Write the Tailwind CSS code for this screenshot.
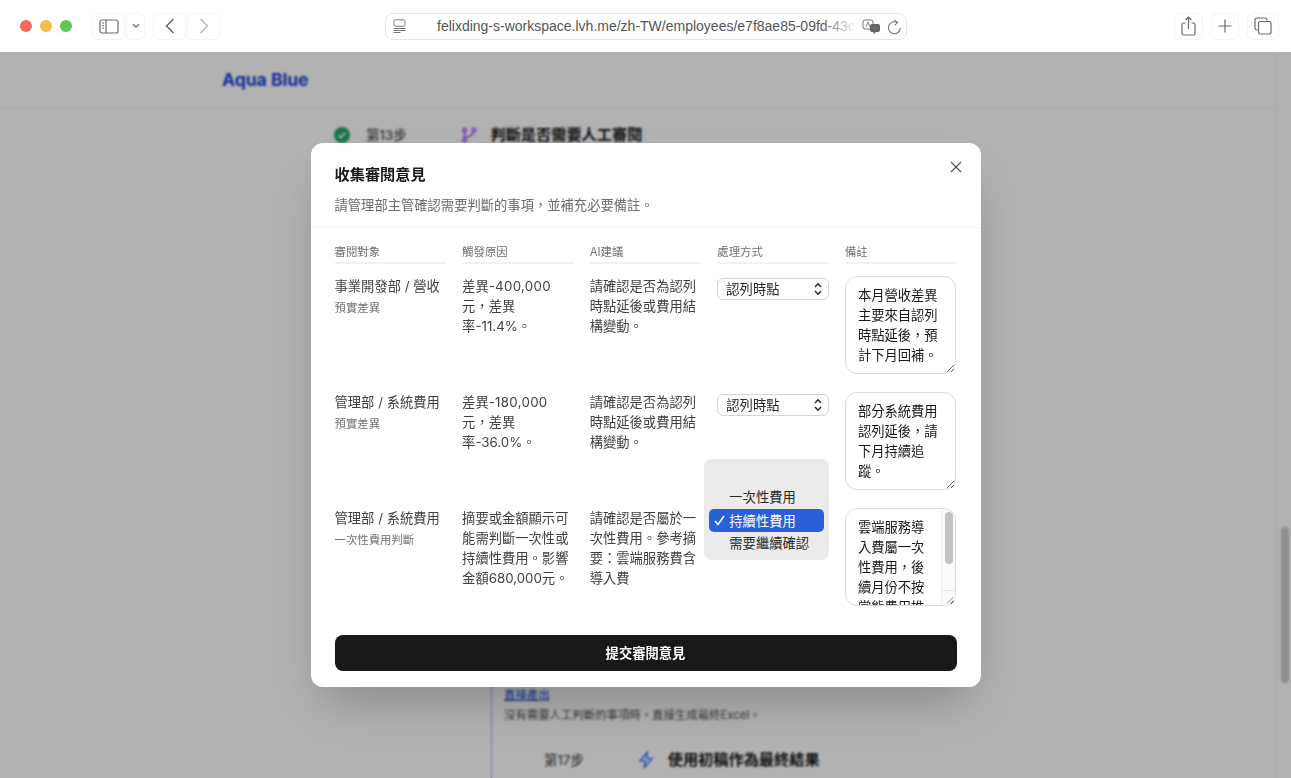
<!DOCTYPE html>
<html lang="zh-TW">
<head>
    <meta charset="UTF-8">
    <meta name="viewport" content="width=device-width, initial-scale=1.0">
    <title>收集審閱意見</title>
    <script src="https://cdn.jsdelivr.net/npm/@tailwindcss/browser@4"></script>
</head>
<body class="h-[778px] w-[1291px] overflow-hidden bg-white font-['Inter','Noto_Sans_CJK_TC',sans-serif] text-[13.3px] leading-[20px] text-[#27272a] antialiased">

    <!-- browser toolbar -->
    <div class="flex h-[52px] items-center bg-white pl-5 pr-3">
        <div class="flex gap-2">
            <span class="size-3 rounded-full bg-[#ee6a5f]"></span>
            <span class="size-3 rounded-full bg-[#f5bd4f]"></span>
            <span class="size-3 rounded-full bg-[#61c454]"></span>
        </div>
        <button class="ml-5 flex h-[27px] w-[33px] items-center justify-center rounded-md border border-[#f4f4f4]">
            <svg width="20" height="15" viewBox="0 0 20 15" fill="none" stroke="#6a6a6a" stroke-width="1.2"><rect x="1" y="1" width="18" height="13" rx="2"/><path d="M7 1v13M3 4h2M3 6.5h2M3 9h2"/></svg>
        </button>
        <button class="ml-[1px] flex h-[27px] w-[19px] items-center justify-center rounded-md border border-[#f4f4f4]">
            <svg width="8" height="6" viewBox="0 0 8 6" fill="none" stroke="#6a6a6a" stroke-width="1.3"><path d="M1 1.2l3 3 3-3"/></svg>
        </button>
        <button class="ml-[8px] flex h-[27px] w-[33px] items-center justify-center rounded-md border border-[#f4f4f4]">
            <svg width="10" height="16" viewBox="0 0 10 16" fill="none" stroke="#5f5f5f" stroke-width="1.4"><path d="M8.5 1L1.5 8l7 7"/></svg>
        </button>
        <button class="ml-[1px] flex h-[27px] w-[33px] items-center justify-center rounded-md border border-[#f4f4f4]">
            <svg width="10" height="16" viewBox="0 0 10 16" fill="none" stroke="#b5b5b5" stroke-width="1.4"><path d="M1.5 1l7 7-7 7"/></svg>
        </button>

        <div class="relative ml-[165px] flex h-[27px] w-[522px] items-center rounded-lg border border-[#e6e6e6] pl-[7px]">
            <svg width="13" height="14" viewBox="0 0 13 14" fill="none" stroke="#777" stroke-width="1"><rect x="1" y="0.8" width="11" height="6.5" rx="1.5"/><path d="M0.5 9.5h12M0.5 11.5h12M0.5 13.5h7"/></svg>
            <span class="ml-[31px] whitespace-nowrap font-['Liberation_Sans',sans-serif] text-[14px] text-[#555]">felixding-s-workspace.lvh.me/zh-TW/employees/e7f8ae85-09fd-43c</span>
            <span class="absolute left-[436px] top-0 h-full w-[34px] bg-gradient-to-r from-white/0 to-white"></span>
            <svg class="absolute left-[476px] top-[5px]" width="20" height="16" viewBox="0 0 20 16" fill="none"><rect x="1" y="1" width="10" height="9" rx="2" stroke="#777"/><rect x="8" y="5" width="10" height="8" rx="2" fill="#666"/><path d="M11 13l1 2 2-2" fill="#666"/><path d="M4 8l2-5 2 5M11 9h4" stroke="#777" stroke-width="0.9"/></svg>
            <svg class="absolute left-[501px] top-[5px]" width="15" height="16" viewBox="0 0 15 16" fill="none" stroke="#777" stroke-width="1.1"><path d="M10.5 3.6A6 6 0 1 0 13.4 9"/><path d="M7.5 1l3 2.6-2.8 2.6"/></svg>
        </div>

        <div class="ml-auto flex items-center gap-2">
            <button class="flex h-[27px] w-[29px] items-center justify-center rounded-md border border-[#f4f4f4]">
                <svg width="15" height="20" viewBox="0 0 15 20" fill="none" stroke="#6a6a6a" stroke-width="1.2"><path d="M4.5 7H2.5a1.5 1.5 0 0 0-1.5 1.5v9A1.5 1.5 0 0 0 2.5 19h10a1.5 1.5 0 0 0 1.5-1.5v-9A1.5 1.5 0 0 0 12.5 7h-2"/><path d="M7.5 13V1M4.5 4l3-3 3 3"/></svg>
            </button>
            <button class="flex h-[27px] w-[28px] items-center justify-center rounded-md border border-[#f4f4f4]">
                <svg width="14" height="14" viewBox="0 0 14 14" fill="none" stroke="#6a6a6a" stroke-width="1.2"><path d="M7 0.5v13M0.5 7h13"/></svg>
            </button>
            <button class="flex h-[27px] w-[32px] items-center justify-center rounded-md border border-[#f4f4f4]">
                <svg width="18" height="18" viewBox="0 0 18 18" fill="none" stroke="#6a6a6a" stroke-width="1.2"><path d="M3.5 13H3a2 2 0 0 1-2-2V3a2 2 0 0 1 2-2h8a2 2 0 0 1 2 2v.5"/><rect x="4.5" y="4.5" width="12.5" height="12.5" rx="2"/></svg>
            </button>
        </div>
    </div>

    <!-- page behind the dialog -->
    <div class="relative h-[726px] overflow-hidden bg-white">
        <div class="flex h-full">
            <div class="flex-1">
                <header class="flex h-[57px] items-center border-b border-[#ececec] pl-[222px]">
                    <span class="text-[17.5px] font-bold text-[#2140e0]">Aqua Blue</span>
                </header>

                <div class="ml-[334px] mt-[16px] flex items-center">
                    <svg width="16" height="16" viewBox="0 0 16 16"><circle cx="8" cy="8" r="8" fill="#22a869"/><path d="M4.5 8.2l2.4 2.4 4.5-4.7" fill="none" stroke="#fff" stroke-width="1.6"/></svg>
                    <span class="ml-[16px] font-medium text-[#555]">第13步</span>
                    <svg class="ml-[55px]" width="16" height="16" viewBox="0 0 16 16" fill="none" stroke="#a855f7" stroke-width="1.6"><circle cx="3.5" cy="13" r="1.8"/><circle cx="3.5" cy="3" r="1.8"/><circle cx="13" cy="3" r="1.8"/><path d="M3.5 5v6M3.5 10c5 0 8-2 9-5"/></svg>
                    <span class="ml-[13px] text-[15.2px] font-semibold text-[#18181b]">判斷是否需要人工審閱</span>
                </div>

                <div class="ml-[491px] mt-[540px] h-[120px] border-l border-[#93b4ee] pl-[12px]">
                    <div class="text-[11.4px] font-medium underline text-[#2f62d8]">直接產出</div>
                    <div class="text-[11.4px] text-[#555]">沒有需要人工判斷的事項時，直接生成最終Excel。</div>
                    <div class="ml-[40px] mt-[25px] flex items-center">
                        <span class="font-medium text-[#555]">第17步</span>
                        <svg class="ml-[54px]" width="16" height="18" viewBox="0 0 16 18" fill="none" stroke="#3b82f6" stroke-width="1.6"><path d="M9.5 1L2 10h5.5L6 17l8-9.5H8.5z"/></svg>
                        <span class="ml-[14px] text-[15.2px] font-semibold text-[#18181b]">使用初稿作為最終結果</span>
                    </div>
                </div>
            </div>

            <div class="relative w-[15px] border-l border-[#ececec]">
                <div class="absolute left-[4px] top-[475px] h-[156px] w-[8px] rounded-full bg-[#cbcbcb]"></div>
            </div>
        </div>

        <!-- overlay + dialog -->
        <div class="absolute inset-0 flex items-center justify-center bg-black/30 backdrop-blur-[1px]">
            <div class="relative h-[544px] w-[670px] rounded-xl bg-white shadow-2xl">
                <button class="absolute right-[19px] top-[18px]">
                    <svg class="block" width="12" height="12" viewBox="0 0 12 12" fill="none" stroke="#555" stroke-width="1.2"><path d="M1 1l10 10M11 1L1 11"/></svg>
                </button>

                <div class="h-[85px] border-b border-[#f1f1f1] px-6 pt-[21px]">
                    <h2 class="text-[15.2px] font-semibold leading-[22px] text-[#18181b]">收集審閱意見</h2>
                    <p class="mt-[9px] text-[#6b6b70]">請管理部主管確認需要判斷的事項，並補充必要備註。</p>
                </div>

                <div class="h-[407px] px-6 pt-[16px]">
                    <div class="grid grid-cols-5 gap-x-4 text-[11.4px] leading-[17px] text-[#71717a]">
                        <div class="border-b-2 border-[#f1f1f1] pb-[1px]">審閱對象</div>
                        <div class="border-b-2 border-[#f1f1f1] pb-[1px]">觸發原因</div>
                        <div class="border-b-2 border-[#f1f1f1] pb-[1px]">AI建議</div>
                        <div class="border-b-2 border-[#f1f1f1] pb-[1px]">處理方式</div>
                        <div class="border-b-2 border-[#f1f1f1] pb-[1px]">備註</div>
                    </div>

                    <div class="mt-[12px] grid grid-cols-5 gap-x-4 gap-y-[18px]">
                        <!-- row 1 -->
                        <div>
                            <div class="text-[#3f3f46]">事業開發部 / 營收</div>
                            <div class="mt-[4px] text-[11.4px] leading-[16px] text-[#71717a]">預實差異</div>
                        </div>
                        <div class="text-[#3f3f46]">差異<span class="tracking-[0.3px]">-400,000</span><br>元，差異<br>率-11.4%。</div>
                        <div class="text-[#3f3f46]">請確認是否為認列時點延後或費用結構變動。</div>
                        <div class="relative mt-[2px] h-[22px]">
                            <select class="h-[22px] w-full appearance-none rounded-md border border-[#d4d4d8] pl-[8px] text-[#27272a]">
                                <option>認列時點</option>
                            </select>
                            <svg class="pointer-events-none absolute right-[7px] top-[4px]" width="8" height="14" viewBox="0 0 8 14" fill="none" stroke="#222" stroke-width="1.3"><path d="M1 5l3-3.3L7 5M1 9l3 3.3L7 9"/></svg>
                        </div>
                        <textarea readonly class="block h-[98px] w-full resize-y overflow-hidden rounded-xl border border-[#dcdcdf] px-3 py-[8px] text-[#18181b]">本月營收差異主要來自認列時點延後，預計下月回補。</textarea>

                        <!-- row 2 -->
                        <div>
                            <div class="text-[#3f3f46]">管理部 / 系統費用</div>
                            <div class="mt-[4px] text-[11.4px] leading-[16px] text-[#71717a]">預實差異</div>
                        </div>
                        <div class="text-[#3f3f46]">差異<span class="tracking-[0.3px]">-180,000</span><br>元，差異<br>率-36.0%。</div>
                        <div class="text-[#3f3f46]">請確認是否為認列時點延後或費用結構變動。</div>
                        <div class="relative mt-[2px] h-[22px]">
                            <select class="h-[22px] w-full appearance-none rounded-md border border-[#d4d4d8] pl-[8px] text-[#27272a]">
                                <option>認列時點</option>
                            </select>
                            <svg class="pointer-events-none absolute right-[7px] top-[4px]" width="8" height="14" viewBox="0 0 8 14" fill="none" stroke="#222" stroke-width="1.3"><path d="M1 5l3-3.3L7 5M1 9l3 3.3L7 9"/></svg>
                        </div>
                        <textarea readonly class="block h-[98px] w-full resize-y overflow-hidden rounded-xl border border-[#dcdcdf] px-3 py-[8px] text-[#18181b]">部分系統費用認列延後，請下月持續追蹤。</textarea>

                        <!-- row 3 -->
                        <div>
                            <div class="text-[#3f3f46]">管理部 / 系統費用</div>
                            <div class="mt-[4px] text-[11.4px] leading-[16px] text-[#71717a]">一次性費用判斷</div>
                        </div>
                        <div class="text-[#3f3f46]">摘要或金額顯示可能需判斷一次性或持續性費用。影響金額680,000元。</div>
                        <div class="text-[#3f3f46]">請確認是否屬於一次性費用。參考摘要：雲端服務費含導入費</div>
                        <div class="relative">
                            <!-- open select menu -->
                            <div class="absolute -left-[13px] -top-[49px] z-10 h-[101px] w-[125px] rounded-lg bg-[#ebebeb] px-[5px] pt-[27px] text-[#27272a]">
                                <div class="h-[23px] pl-[20px] leading-[23px]">一次性費用</div>
                                <div class="flex h-[23px] items-center rounded-[5px] bg-[#2a5fd9] pl-[5px] text-white">
                                    <svg width="11" height="11" viewBox="0 0 11 11" fill="none" stroke="#fff" stroke-width="1.6"><path d="M1 6l3 3.5L10 1"/></svg>
                                    <span class="ml-[4px]">持續性費用</span>
                                </div>
                                <div class="h-[23px] pl-[20px] leading-[23px]">需要繼續確認</div>
                            </div>
                        </div>
                        <div class="relative h-[98px]">
                            <textarea readonly class="block h-full w-full resize-y overflow-hidden rounded-xl border border-[#dcdcdf] pl-3 pr-[27px] pt-[8px] text-[#18181b]">雲端服務導入費屬一次性費用，後續月份不按常態費用推估。</textarea>
                            <div class="pointer-events-none absolute bottom-[1px] right-[1px] top-[1px] w-[14px] rounded-r-xl border-l border-[#efefef] bg-[#fafafa]">
                                <div class="absolute left-[3px] top-[3px] h-[52px] w-[8px] rounded-full bg-[#c2c2c2]"></div>
                                <div class="absolute bottom-[14px] left-0 h-px w-full bg-[#e8e8e8]"></div>
                                <svg class="absolute bottom-[1px] right-[1px]" width="8" height="8" viewBox="0 0 8 8" fill="none" stroke="#8a8a8a" stroke-width="0.9"><path d="M1 7.5L7.5 1M4.5 7.5L7.5 4.5"/></svg>
                            </div>
                        </div>
                    </div>
                </div>

                <div class="px-6">
                    <button class="block h-[36px] w-full rounded-lg bg-[#18181b] font-semibold text-white">提交審閱意見</button>
                </div>
            </div>
        </div>
    </div>
</body>
</html>
